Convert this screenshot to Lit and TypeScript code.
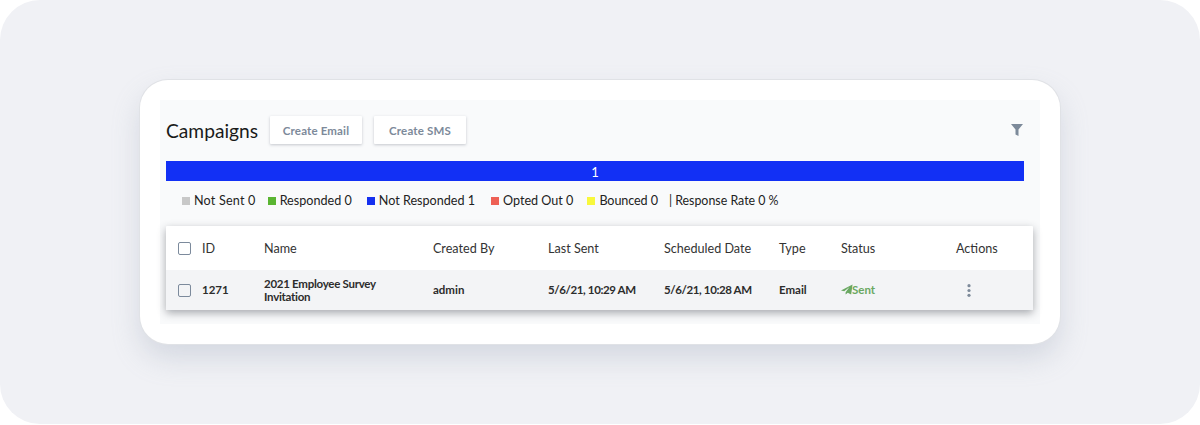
import { LitElement, html, css } from "lit";
import { customElement } from "lit/decorators.js";

const legend = [
  ["#c8c8c8", "Not Sent 0"],
  ["#5ab532", "Responded 0"],
  ["#1530f0", "Not Responded 1"],
  ["#ee6055", "Opted Out 0"],
  ["#f8f83c", "Bounced 0"],
];

@customElement("app-root")
export class AppRoot extends LitElement {
  static styles = css`
    :host { display: block; width: 1200px; height: 425px; background: #fff; font-family: Lato, "Noto Sans", sans-serif; overflow: hidden; }
    .stage { box-sizing: border-box; width: 1200px; height: 424px; background: #f0f1f5; border-radius: 40px; padding: 80px 140px 0; }
    .card { box-sizing: border-box; height: 264px; background: #fff; border-radius: 28px; padding: 20px; box-shadow: 0 0 0 1px #e0e2e6, 0 14px 28px rgba(150,160,180,.3); }
    .panel { height: 224px; background: #f9fafb; padding: 16px 7px 0 6px; box-sizing: border-box; }
    .top { display: flex; align-items: center; height: 28px; margin-right: 2px; padding-right: 8px; }
    h1 { margin: 0 12px 0 0; font-size: 19.2px; font-weight: 400; color: #1a1a1a; width: 92px; white-space: nowrap; line-height: 28px; padding-top: 1px; }
    button { box-sizing: border-box; height: 28px; width: 92px; margin-right: 12px; border: 0; background: #fff; border-radius: 1px; font: 700 11.5px Lato, sans-serif; color: #7d8a9a; letter-spacing: .15px; box-shadow: 0 1px 3px rgba(60,70,90,.28); }
    .filter { margin-left: auto; width: 12px; height: 12px; display: block; }
    .bar { height: 20px; margin: 17px 9px 0 0; background: #1230f5; color: #fff; font-size: 13px; line-height: 23px; text-align: center; }
    .legend { display: flex; align-items: center; height: 19px; margin: 10px 0 -1px 16px; font-size: 12.6px; color: #222; white-space: nowrap; }
    .item { display: flex; align-items: center; margin-right: 15px; }
    .item:nth-child(1) { margin-right: 12px; letter-spacing: .2px; }
    .item:nth-child(3) { margin-right: 16px; }
    .item:nth-child(4) { margin-right: 14px; }
    .item:nth-child(5) { margin-right: 11px; letter-spacing: -.1px; }
    .sw { width: 8px; height: 8px; margin-right: 4px; }
    .rate { font-size: 12.4px; }
    .table { margin-top: 17px; height: 84px; background: #fff; border-radius: 1px; box-shadow: 0 3px 9px rgba(50,55,65,.42); overflow: hidden; }
    .row { display: grid; grid-template-columns: 24px 62px 169px 115px 116px 115px 62px 115px 1fr; align-items: center; padding-left: 12px; }
    .head { height: 44px; font-size: 12.6px; color: #333; }
    .body { height: 40px; background: #f3f4f6; font-size: 11.5px; font-weight: 700; color: #2c2c2c; }
    .body .t { margin-bottom: 2px; }
    .body .name { line-height: 13.5px; width: 120px; letter-spacing: -.27px; }
    .date { letter-spacing: -.38px; }
    .cb { box-sizing: border-box; width: 13px; height: 13px; border: 1.7px solid #7c8a9c; border-radius: 2px; }
    .sent { display: flex; align-items: center; color: #6aa862; font-size: 11.5px; }
    .sent svg { width: 12px; height: 11px; margin-right: -1px; }
    .dots { display: block; width: 4px; height: 13px; margin-left: 11px; }
  `;

  render() {
    return html`<div class="stage"><div class="card"><div class="panel">
      <div class="top">
        <h1>Campaigns</h1>
        <button>Create Email</button><button>Create SMS</button>
        <svg class="filter" viewBox="0 0 12 12"><path fill="#7d8a9a" d="M0 0h12L7.5 5.5V12L4.5 10.5v-5z"/></svg>
      </div>
      <div class="bar">1</div>
      <div class="legend">
        ${legend.map(([c, t]) => html`<span class="item"><span class="sw" style="background:${c}"></span>${t}</span>`)}
        <span class="rate">| Response Rate 0 %</span>
      </div>
      <div class="table">
        <div class="row head">
          <span class="cb"></span><span>ID</span><span>Name</span><span>Created By</span><span>Last Sent</span><span>Scheduled Date</span><span>Type</span><span>Status</span><span>Actions</span>
        </div>
        <div class="row body">
          <span class="cb"></span><span class="t">1271</span><span class="name">2021 Employee Survey Invitation</span><span class="t">admin</span><span class="t date">5/6/21, 10:29 AM</span><span class="t date">5/6/21, 10:28 AM</span><span class="t">Email</span>
          <span class="t sent"><svg viewBox="0 0 13 11"><path fill="#6aa862" d="M12.5 0 0 6.5l3.5 1L9 3 5 8.5V11l2.3-2 3.7 2z"/></svg>Sent</span>
          <span><svg class="dots" viewBox="0 0 4 13"><g fill="#7d8a9a"><circle cx="2" cy="1.7" r="1.6"/><circle cx="2" cy="6.5" r="1.6"/><circle cx="2" cy="11.3" r="1.6"/></g></svg></span>
        </div>
      </div>
    </div></div></div>`;
  }
}
